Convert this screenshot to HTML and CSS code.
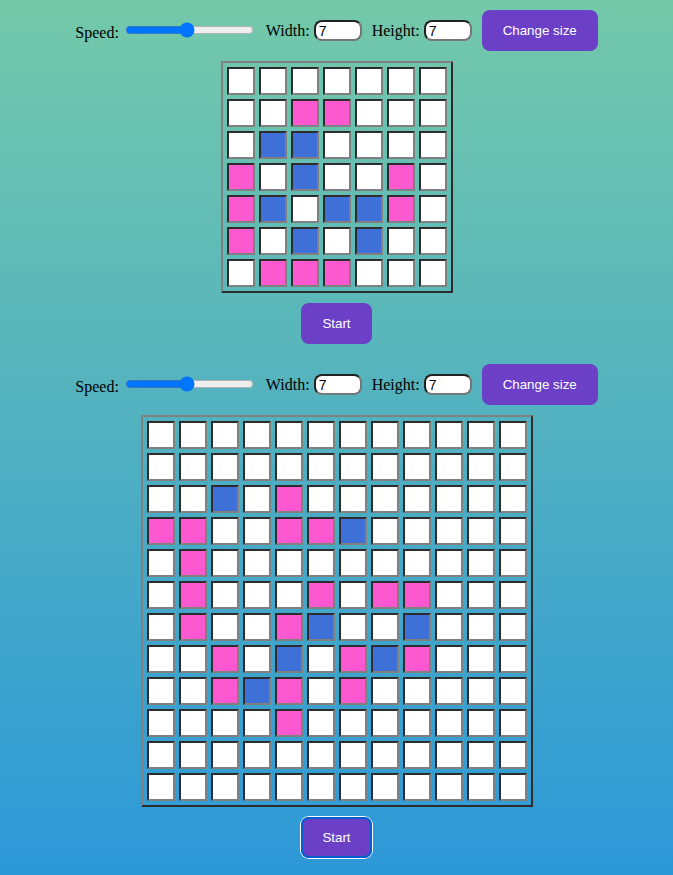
FILE: index.html
```html
<!DOCTYPE html>
<html lang="en">
<head>
  <meta charset="utf-8">
  <meta name="viewport" content="width=device-width, initial-scale=1">
  <title>Game of Life</title>
  <link rel="stylesheet" href="styles.css">
</head>
<body>
  <section class="game">
    <form class="controls">
      <label class="speed">Speed: <input class="slider" type="range" min="0" max="100" value="48"></label>
      <label>Width: <input class="size" type="number" value="7"></label>
      <label>Height: <input class="size" type="number" value="7"></label>
      <button class="button" type="button">Change size</button>
    </form>
    <table class="board" data-cells="......./..PP.../.BB..../P.B..P./PB.BBP./P.B.B../.PPP..."></table>
    <button class="button" type="button">Start</button>
  </section>
  <section class="game">
    <form class="controls">
      <label class="speed">Speed: <input class="slider" type="range" min="0" max="100" value="48"></label>
      <label>Width: <input class="size" type="number" value="7"></label>
      <label>Height: <input class="size" type="number" value="7"></label>
      <button class="button" type="button">Change size</button>
    </form>
    <table class="board" data-cells="............/............/..B.P......./PP..PPB...../.P........../.P...P.PP.../.P..PB..B.../..P.B.PBP.../..PBP.P...../....P......./............/............"></table>
    <button class="button active" type="button">Start</button>
  </section>
  <script src="script.js"></script>
</body>
</html>
```
FILE: styles.css
```css
* {
  box-sizing: border-box;
}

html {
  min-height: 100%;
  background: linear-gradient(to bottom, #74c9a9, #2c98d8);
}

body {
  margin: 0;
  color: #000;
  font: 16px "Liberation Serif", "Times New Roman", serif;
}

.game {
  display: flex;
  flex-direction: column;
  align-items: center;
  gap: 10px;
  padding: 10px;
}

.controls {
  display: flex;
  align-items: center;
  gap: 10px;
}

.slider {
  width: 129px;
  height: 16px;
  margin: 2px;
}

.size {
  width: 48px;
  height: 21px;
  padding: 1px 2px 1px 3px;
  border: 2px solid;
  border-color: #222 #767676 #767676 #222;
  border-radius: 8px;
  background: #fff;
  color: #000;
  font: 14px "Liberation Sans", Arial, sans-serif;
}

.button {
  height: 41px;
  padding: 0 21px;
  border: 0;
  border-radius: 8px;
  background: #6b40c6;
  color: #fff;
  font-family: "Liberation Sans", Arial, sans-serif;
  font-weight: 500;
}

.active {
  box-shadow: inset 0 0 0 2px #0060d0, 0 0 0 1px #fff;
}

.board {
  border: 2px solid;
  border-color: #808080 #2c2c2c #2c2c2c #808080;
  border-collapse: separate;
  border-spacing: 4px;
}

.cell {
  width: 28px;
  height: 28px;
  padding: 0;
  border: 2px solid;
  border-color: #2c2c2c #808080 #808080 #2c2c2c;
  background: #fff;
}

.pink {
  background: #fc58d0;
}

.blue {
  background: #3e70d8;
}
```
FILE: script.js
```js
const colors = { P: "pink", B: "blue" };

document.querySelectorAll(".board").forEach((board) => {
  board.dataset.cells.split("/").forEach((line) => {
    const row = board.insertRow();
    for (const mark of line) {
      const cell = row.insertCell();
      cell.className = "cell";
      if (colors[mark]) cell.classList.add(colors[mark]);
    }
  });
});
```
